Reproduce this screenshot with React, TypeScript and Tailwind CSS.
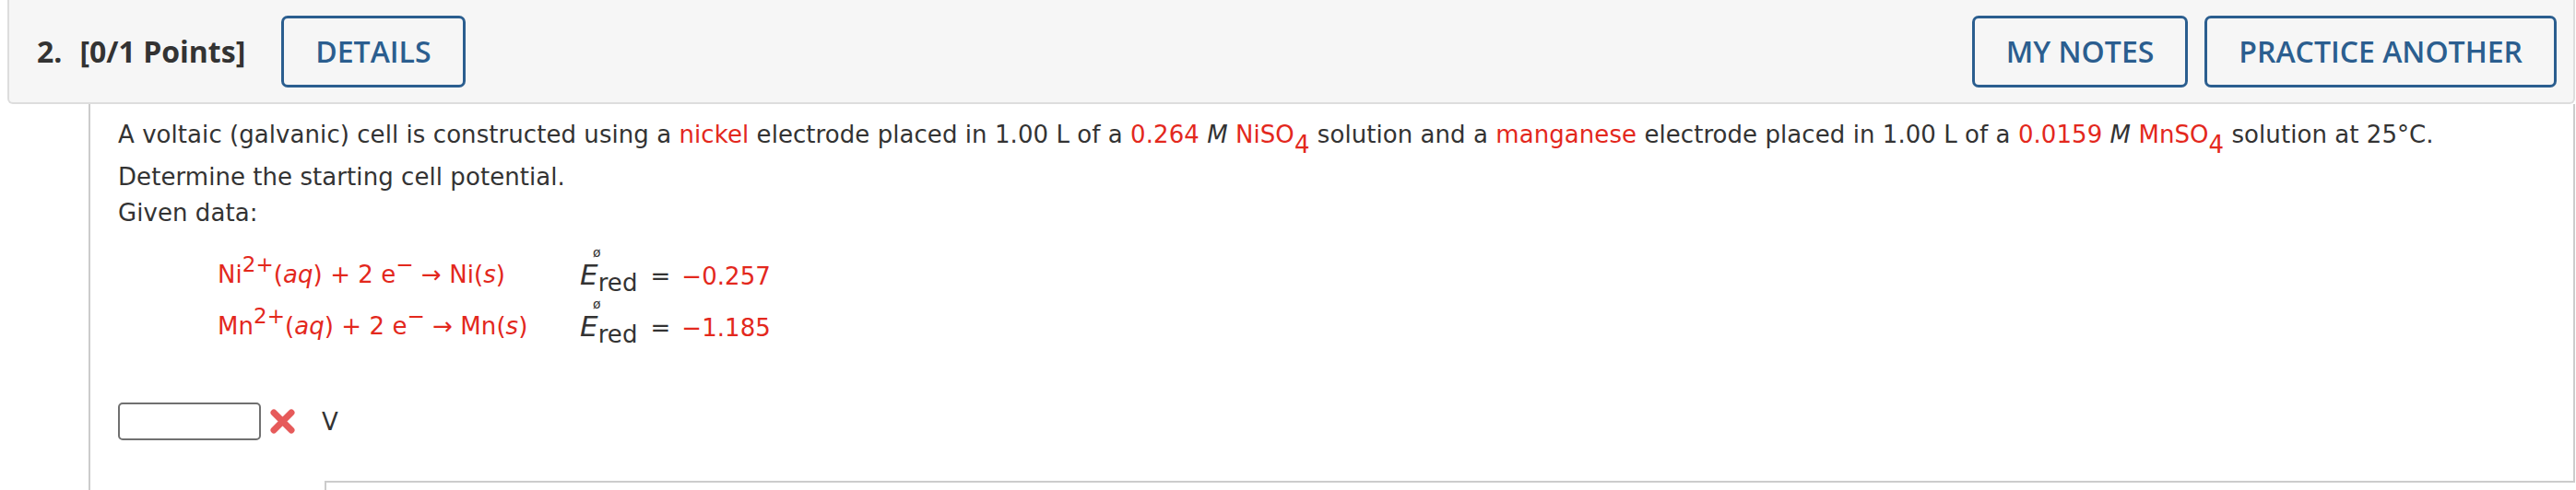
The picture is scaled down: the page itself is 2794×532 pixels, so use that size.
import React from 'react';

function OutlineButton({ children, className = '' }: { children: React.ReactNode; className?: string }) {
  return (
    <button
      className={`h-[78px] px-[34px] border-[3px] border-[#2b5e8f] rounded-[7px] text-[32px] font-semibold text-[#2b5e8f] leading-none ${className}`}
    >
      {children}
    </button>
  );
}

function Ered({ value }: { value: string }) {
  return (
    <div className="flex items-baseline">
      <span className="relative inline-block">
        <i className="text-[31px] text-[#333]">E</i>
        <span className="absolute left-[14px] top-[-3px] text-[14px] leading-none text-[#333]">ø</span>
      </span>
      <span className="relative top-[7px] text-[#333]">red</span>
      <span className="ml-[14px] text-[#333]">=</span>
      <span className="ml-[12px] text-[#e3281d]">{value}</span>
    </div>
  );
}

export default function App() {
  return (
    <div className="w-[2794px] h-[532px] bg-white overflow-hidden font-['DejaVu_Sans',sans-serif] text-[#333]">
      {/* Question header */}
      <header className="ml-[8px] w-[2785px] h-[113px] bg-[#f6f6f6] border-2 border-t-0 border-[#dddddd] rounded-b-[6px] flex items-center pl-[30px] pr-[18px] font-['Open_Sans',sans-serif]">
        <div className="flex text-[32px] font-bold text-[#333]">
          <span>2.</span>
          <span className="ml-[19px]">[0/1 Points]</span>
        </div>
        <OutlineButton className="ml-[39px]">DETAILS</OutlineButton>
        <div className="ml-auto flex gap-[18px]">
          <OutlineButton>MY NOTES</OutlineButton>
          <OutlineButton>PRACTICE ANOTHER</OutlineButton>
        </div>
      </header>

      {/* Question body */}
      <div className="ml-[96px] w-[2697px] h-[419px] flex flex-col border-l-2 border-[#cccccc]">
        <div className="h-[409px] border-r-2 border-[#cccccc] pl-[30px] pt-[14px] text-[26px] leading-[39px] tracking-[0.06px]">
          <p>
            A voltaic (galvanic) cell is constructed using a <span className="text-[#e3281d]">nickel</span> electrode placed in
            1.00 L of a <span className="text-[#e3281d]">0.264</span> <i>M</i>{' '}
            <span className="text-[#e3281d]">
              NiSO<sub className="text-[26px] leading-[31px] align-[-11px] bottom-0">4</sub>
            </span>{' '}
            solution and a <span className="text-[#e3281d]">manganese</span> electrode placed in 1.00 L of a{' '}
            <span className="text-[#e3281d]">0.0159</span> <i>M</i>{' '}
            <span className="text-[#e3281d]">
              MnSO<sub className="text-[26px] leading-[31px] align-[-11px] bottom-0">4</sub>
            </span>{' '}
            solution at 25°C.
          </p>
          <p>Determine the starting cell potential.</p>
          <p>Given data:</p>

          <div className="ml-[108px] mt-[19px]">
            <div className="flex h-[56px] leading-[56px]">
              <div className="w-[393px] text-[#e3281d]">
                Ni<sup className="text-[23px] leading-none align-[12px] top-0">2+</sup>(<i>aq</i>) + 2 e
                <sup className="text-[23px] leading-none align-[12px] top-0">−</sup> → Ni(<i>s</i>)
              </div>
              <Ered value="−0.257" />
            </div>
            <div className="flex h-[56px] leading-[56px]">
              <div className="w-[393px] text-[#e3281d]">
                Mn<sup className="text-[23px] leading-none align-[12px] top-0">2+</sup>(<i>aq</i>) + 2 e
                <sup className="text-[23px] leading-none align-[12px] top-0">−</sup> → Mn(<i>s</i>)
              </div>
              <Ered value="−1.185" />
            </div>
          </div>

          <div className="flex items-center mt-[55px]">
            <div className="w-[155px] h-[41px] border-2 border-[#707070] rounded-[5px] bg-white" />
            <svg className="ml-[10px]" width="27" height="27" viewBox="0 0 27 27">
              <path d="M4 4 L23 23 M23 4 L4 23" stroke="#e65a5a" strokeWidth="7" strokeLinecap="round" />
            </svg>
            <span className="ml-[29px] leading-none">V</span>
          </div>
        </div>
        <div className="ml-[254px] flex-1 border-t-2 border-l-2 border-[#cccccc]" />
      </div>
    </div>
  );
}
